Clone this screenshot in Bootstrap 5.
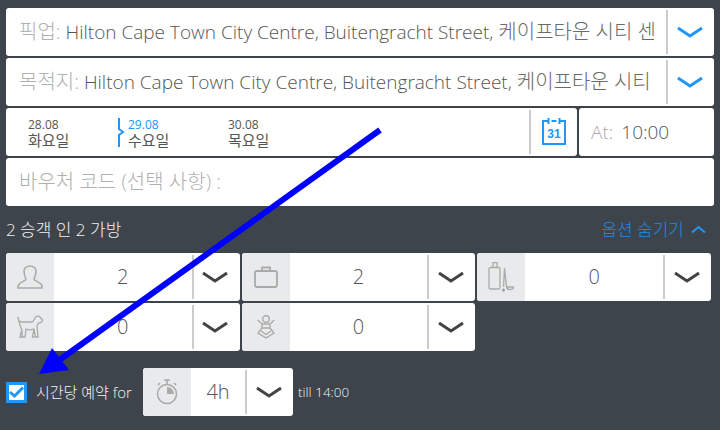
<!doctype html>
<html lang="ko">
<head>
  <meta charset="utf-8">
  <meta name="viewport" content="width=device-width, initial-scale=1">
  <title>Booking form</title>
  <link href="https://cdn.jsdelivr.net/npm/bootstrap@5.3.3/dist/css/bootstrap.min.css" rel="stylesheet">
  <style>
    html, body { height: 100%; }
    body { background: #3e444c; font-family: "Open Sans", "Noto Sans CJK KR", sans-serif; font-weight: 300; color: #555; overflow: hidden; position: relative; }
    .page-wrap { padding: 8px 6px 0; width: 720px; }
    .field-row { height: 48px; background: #fff; border-radius: 3px; margin-bottom: 2px; font-size: 19px; }
    .field-text { padding-left: 13px; width: 648px; margin-right: 12px; white-space: nowrap; overflow: hidden; flex: none; }
    .ko-text { font-size: 20px; color: #6a6a6a; }
    .field-label, .field-text.field-label { color: #b0b0b0; }
    .sep { width: 2px; background: #ccc; margin: 2px 0; flex: none; }
    .chev-cell { flex: 1; padding-right: 3px; }
    .date-row { margin-bottom: 2px; }
    .date-main { width: 571px; height: 48px; background: #fff; border-radius: 3px; }
    .date-list { width: 523px; padding-left: 22px; position: relative; }
    .date-item { width: 100px; font-size: 15px; font-weight: 400; color: #555; line-height: 16px; }
    .date-num { font-size: 12px; display: block; line-height: 15px; }
    .date-item.active .date-num { color: #2196f3; }
    .date-mark { position: absolute; left: 111px; top: 0; }
    .cal-cell { width: 46px; }
    .time-box { width: 135px; height: 48px; background: #fff; border-radius: 3px; margin-left: 2px; font-size: 19px; padding-left: 12px; }
    .time-box span { color: #aaa; margin-right: 8px; }
    .summary-row { height: 45px; padding-bottom: 2px; color: #f2f2f2; font-size: 17px; font-weight: 300; width: 708px; }
    .options-link { color: #1e8ae6; margin-right: 8px; gap: 7px; }
    .counter-grid { display: grid; grid-template-columns: repeat(3, 1fr); gap: 2px; width: 705px; }
    .counter { height: 48px; background: #fff; border-radius: 3px; overflow: hidden; }
    .icon-cell { width: 48px; background: #e9eaec; flex: none; }
    .count-val { flex: 1; text-align: center; font-size: 20px; }
    .counter .chev-cell { flex: none; width: 46px; }
    .hours-row { margin-top: 17px; color: #f5f5f5; font-size: 15px; font-weight: 300; }
    .check-box { width: 21px; height: 21px; border: 3px solid #2196f3; background: #fff; flex: none; }
    .check-label { margin-left: 9px; width: 107px; white-space: nowrap; }
    .hours-box { width: 150px; height: 48px; background: #fff; border-radius: 3px; overflow: hidden; }
    .hours-box .count-val { flex: none; width: 54px; color: #555; font-weight: 300; }
    .hours-box .chev-cell { flex: 1; }
    .till-text { margin-left: 5px; font-size: 13.500px; }
    .arrow-over { position: absolute; left: 0; top: 0; pointer-events: none; }
  </style>
</head>
<body>
  <div class="page-wrap">
    <!-- pickup / destination -->
    <div class="field-row d-flex align-items-stretch">
      <div class="field-text align-self-center"><span class="field-label ko-text">픽업:</span> Hilton Cape Town City Centre, Buitengracht Street, <span class="ko-text">케이프타운 시티 센터</span></div>
      <div class="sep"></div>
      <div class="chev-cell d-flex align-items-center justify-content-center">
        <svg width="26" height="13" viewBox="0 0 26 13"><path d="M1 2 L13 10 L25 2" fill="none" stroke="#2196f3" stroke-width="3"/></svg>
      </div>
    </div>
    <div class="field-row d-flex align-items-stretch">
      <div class="field-text align-self-center"><span class="field-label ko-text">목적지:</span> Hilton Cape Town City Centre, Buitengracht Street, <span class="ko-text">케이프타운 시티</span></div>
      <div class="sep"></div>
      <div class="chev-cell d-flex align-items-center justify-content-center">
        <svg width="26" height="13" viewBox="0 0 26 13"><path d="M1 2 L13 10 L25 2" fill="none" stroke="#2196f3" stroke-width="3"/></svg>
      </div>
    </div>

    <!-- dates -->
    <div class="date-row d-flex">
      <div class="date-main d-flex align-items-stretch">
        <div class="date-list d-flex align-items-center">
          <div class="date-item"><span class="date-num">28.08</span>화요일</div>
          <div class="date-item active"><span class="date-num">29.08</span>수요일</div>
          <div class="date-item"><span class="date-num">30.08</span>목요일</div>
          <svg class="date-mark" width="8" height="48" viewBox="0 0 8 48"><path d="M2 10 V21 L6 24 L2 27 V39" fill="none" stroke="#2196f3" stroke-width="2"/></svg>
        </div>
        <div class="sep"></div>
        <div class="cal-cell d-flex align-items-center justify-content-center">
          <svg width="24" height="28" viewBox="0 0 24 28"><path d="M6 3 H1 V26 H23 V3 H18 M9.500 3 H14.500 M6.500 0 V6 M17.500 0 V6" fill="none" stroke="#2196f3" stroke-width="2"/><text x="12" y="20" text-anchor="middle" font-family="Liberation Sans, sans-serif" font-weight="700" font-size="12" fill="#2196f3">31</text></svg>
        </div>
      </div>
      <div class="time-box d-flex align-items-center"><span>At:</span>10:00</div>
    </div>

    <!-- voucher -->
    <div class="field-row d-flex align-items-center">
      <div class="field-text field-label ko-text">바우처 코드 (선택 사항) :</div>
    </div>

    <div class="summary-row d-flex align-items-center justify-content-between">
      <div>2 승객 인 2 가방</div>
      <div class="options-link d-flex align-items-center">옵션 숨기기
        <svg width="15" height="9" viewBox="0 0 15 9"><path d="M1 7.500 L7.500 2 L14 7.500" fill="none" stroke="#2196f3" stroke-width="2"/></svg>
      </div>
    </div>

    <!-- passenger, luggage counters -->
    <div class="counter-grid">
      <div class="counter d-flex align-items-stretch">
        <div class="icon-cell d-flex align-items-center justify-content-center">
          <svg width="26" height="24" viewBox="0 0 26 24"><path d="M9 14 C7 10 7 7 7 6 C7 3 10 1 13 1 C16 1 19 3 19 6 C19 7 19 10 17 14 C17 16 24 17 25 21 V23 H1 V21 C2 17 9 16 9 14 Z" fill="none" stroke="#aaa" stroke-width="1.600"/></svg>
        </div>
        <div class="count-val align-self-center">2</div>
        <div class="sep"></div>
        <div class="chev-cell d-flex align-items-center justify-content-center">
          <svg width="26" height="13" viewBox="0 0 26 13"><path d="M1 2 L13 10 L25 2" fill="none" stroke="#444" stroke-width="3"/></svg>
        </div>
      </div>
      <div class="counter d-flex align-items-stretch">
        <div class="icon-cell d-flex align-items-center justify-content-center">
          <svg width="24" height="22" viewBox="0 0 24 22"><path d="M3 5 H21 Q23 5 23 7 V19 Q23 21 21 21 H3 Q1 21 1 19 V7 Q1 5 3 5 Z M8 5 V1.500 H16 V5" fill="none" stroke="#aaa" stroke-width="1.800"/></svg>
        </div>
        <div class="count-val align-self-center">2</div>
        <div class="sep"></div>
        <div class="chev-cell d-flex align-items-center justify-content-center">
          <svg width="26" height="13" viewBox="0 0 26 13"><path d="M1 2 L13 10 L25 2" fill="none" stroke="#444" stroke-width="3"/></svg>
        </div>
      </div>
      <div class="counter d-flex align-items-stretch">
        <div class="icon-cell d-flex align-items-center justify-content-center">
          <svg width="26" height="30" viewBox="0 0 26 30"><path d="M2.500 5.500 H10.500 Q12 5.500 12 7 V25.500 Q12 27 10.500 27 H2.500 Q1 27 1 25.500 V7 Q1 5.500 2.500 5.500 Z M5 5.500 V0.700 H9 V5.500 M16.500 6 L15.500 25 M16.500 6 L18.500 25 Q19 27.500 22 27.500 Q25.500 27.500 25.500 25 H19" fill="none" stroke="#aaa" stroke-width="1.300"/><circle cx="15.500" cy="28" r="1.500" fill="#999"/></svg>
        </div>
        <div class="count-val align-self-center">0</div>
        <div class="sep"></div>
        <div class="chev-cell d-flex align-items-center justify-content-center">
          <svg width="26" height="13" viewBox="0 0 26 13"><path d="M1 2 L13 10 L25 2" fill="none" stroke="#444" stroke-width="3"/></svg>
        </div>
      </div>
      <div class="counter d-flex align-items-stretch">
        <div class="icon-cell d-flex align-items-center justify-content-center">
          <svg width="26" height="24" viewBox="0 0 26 24"><path d="M1 2 C1 5 2 7 5 7 H15 C16.500 7 17 5 18 3 C19 1 22 0.500 23 2 L25.500 5 C25.500 7 23 8 21.500 8 L20 11 L21 22 H18.500 L17 14 C14 15 11 15 9 14 L8 22 H5.500 L4.500 14 C3 11 2 7 1 2 Z M5 14 L3 22 H5 M17 14 L15.500 22 H17.500" fill="none" stroke="#aaa" stroke-width="1.300"/></svg>
        </div>
        <div class="count-val align-self-center">0</div>
        <div class="sep"></div>
        <div class="chev-cell d-flex align-items-center justify-content-center">
          <svg width="26" height="13" viewBox="0 0 26 13"><path d="M1 2 L13 10 L25 2" fill="none" stroke="#444" stroke-width="3"/></svg>
        </div>
      </div>
      <div class="counter d-flex align-items-stretch">
        <div class="icon-cell d-flex align-items-center justify-content-center">
          <svg width="18" height="24" viewBox="0 0 18 24"><circle cx="9" cy="4" r="3.300" fill="none" stroke="#aaa" stroke-width="1.400"/><path d="M0.700 5 L5 9 H13 L17.300 5 M5 9 V13 H13 V9 M5 13 L1 18 L9 23 L17 18 L13 13 M4 16 L9 19.500 L14 16" fill="none" stroke="#aaa" stroke-width="1.400"/></svg>
        </div>
        <div class="count-val align-self-center">0</div>
        <div class="sep"></div>
        <div class="chev-cell d-flex align-items-center justify-content-center">
          <svg width="26" height="13" viewBox="0 0 26 13"><path d="M1 2 L13 10 L25 2" fill="none" stroke="#444" stroke-width="3"/></svg>
        </div>
      </div>
    </div>

    <!-- hourly booking -->
    <div class="hours-row d-flex align-items-center">
      <div class="check-box d-flex align-items-center justify-content-center">
        <svg width="15" height="12" viewBox="0 0 15 12"><path d="M1 6 L5.500 10 L14 1.500" fill="none" stroke="#2196f3" stroke-width="3"/></svg>
      </div>
      <div class="check-label">시간당 예약 for</div>
      <div class="hours-box d-flex align-items-stretch">
        <div class="icon-cell d-flex align-items-center justify-content-center">
          <svg width="22" height="26" viewBox="0 0 22 26"><circle cx="11" cy="15" r="9.500" fill="none" stroke="#aaa" stroke-width="1.600"/><path d="M11 15 V8 A7 7 0 0 1 18 15 Z" fill="#aaa"/><path d="M8 1 H14 M11 1 V5 M2 6 L4 4 M20 6 L18 4" fill="none" stroke="#aaa" stroke-width="1.600"/></svg>
        </div>
        <div class="count-val align-self-center">4h</div>
        <div class="sep"></div>
        <div class="chev-cell d-flex align-items-center justify-content-center">
          <svg width="26" height="13" viewBox="0 0 26 13"><path d="M1 2 L13 10 L25 2" fill="none" stroke="#444" stroke-width="3"/></svg>
        </div>
      </div>
      <div class="till-text">till 14:00</div>
    </div>
  </div>

  <!-- annotation arrow over the form -->
  <svg class="arrow-over" width="720" height="430" viewBox="0 0 720 430"><path d="M380 130 L58 361" stroke="#0000ff" stroke-width="6" fill="none"/><path d="M39 374 L52 348 L69 370 Z" fill="#0000ff"/></svg>

  <script src="https://cdn.jsdelivr.net/npm/bootstrap@5.3.3/dist/js/bootstrap.bundle.min.js"></script>
</body>
</html>
